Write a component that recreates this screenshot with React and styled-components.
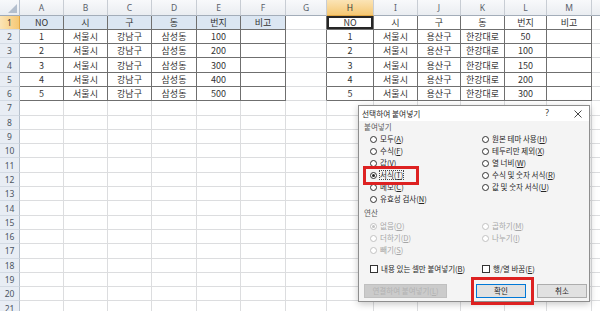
import React from 'react';
import styled, { createGlobalStyle } from 'styled-components';

const GlobalStyle = createGlobalStyle`
  html, body { margin: 0; padding: 0; background: #fff; }
  body { font-family: "Noto Sans CJK KR", "Noto Sans", sans-serif; overflow: hidden; }
`;

const COLS = ['A', 'B', 'C', 'D', 'E', 'F', 'G', 'H', 'I', 'J', 'K', 'L', 'M', 'N'];
const WIDTHS = [44, 44, 44, 45, 44, 45, 41, 47, 44, 43, 44, 42, 45, 40];
const ROW_COUNT = 21;

const HEAD = ['NO', '시', '구', '동', '번지', '비고'];
const LEFT = [1, 2, 3, 4, 5].map((n) => [n, '서울시', '강남구', '삼성동', n * 100, '']);
const RIGHT = [[1, 50], [2, 100], [3, 150], [4, 200], [5, 300]].map(([n, v]) => [n, '서울시', '용산구', '한강대로', v, '']);

const Screen = styled.div`
  position: relative;
  width: 600px;
  height: 311px;
  overflow: hidden;
`;

const Sheet = styled.div`
  display: grid;
  grid-template-columns: 20px ${WIDTHS.map((w) => w + 'px').join(' ')};
  grid-template-rows: 15.5px repeat(${ROW_COUNT}, 14.3px);
`;

const Corner = styled.div`
  position: relative;
  background: linear-gradient(#f7f9fb, #e9edf2);
  border-right: 1px solid #b9c3cf;
  border-bottom: 1px solid #9fabb9;
  svg { position: absolute; right: 2px; bottom: 2px; }
`;

const ColHead = styled.div`
  display: flex;
  align-items: center;
  justify-content: center;
  font-family: "Noto Sans", sans-serif;
  font-size: 8.5px;
  color: ${(p) => (p.$active ? '#3b3b3b' : '#59606a')};
  background: ${(p) => (p.$active ? 'linear-gradient(#fbe4b6, #f5c874)' : 'linear-gradient(#f8f9fb, #eaedf1)')};
  border-right: 1px solid #c8cdd4;
  border-bottom: 1px solid ${(p) => (p.$active ? '#e2a845' : '#a3adb9')};
`;

const RowHead = styled.div`
  display: flex;
  align-items: center;
  justify-content: center;
  font-family: "Noto Sans", sans-serif;
  font-size: 8.5px;
  color: ${(p) => (p.$active ? '#3b3b3b' : '#4d5663')};
  background: ${(p) => (p.$active ? 'linear-gradient(90deg, #fbe4b6, #f5c874)' : '#e8edf4')};
  border-right: 1px solid ${(p) => (p.$active ? '#e2a845' : '#b4bfcc')};
  border-bottom: 1px solid #d3dae3;
`;

const Cell = styled.div`
  display: flex;
  align-items: center;
  justify-content: center;
  overflow: hidden;
  white-space: nowrap;
  font-size: 9px;
  line-height: 1;
  color: #333;
  background: ${(p) => (p.$fill ? '#dbe6f2' : '#fff')};
  border-right: 1px solid ${(p) => (p.$table || p.$edge ? '#6f6f6f' : '#dcdddf')};
  border-bottom: 1px solid ${(p) => (p.$table ? '#6f6f6f' : '#dcdddf')};
  box-shadow: ${(p) => (p.$active ? 'inset 0 0 0 2px #262626' : 'none')};
`;

const Dialog = styled.div`
  position: absolute;
  left: 358px;
  top: 105px;
  width: 232px;
  height: 197px;
  box-sizing: border-box;
  display: flex;
  flex-direction: column;
  background: #f4f4f4;
  border: 1px solid #8e8e8e;
  box-shadow: 0 2px 7px rgba(0, 0, 0, 0.22);
  color: #262626;
  font-size: 7.5px;
  line-height: 1;
`;

const TitleBar = styled.div`
  height: 15px;
  display: flex;
  align-items: center;
  padding-left: 3px;
  background: #fff;
`;

const Title = styled.span`
  flex: 1;
  font-size: 7.7px;
`;

const TitleButton = styled.span`
  width: ${(p) => p.$w}px;
  display: flex;
  align-items: center;
  justify-content: center;
  font-family: "Noto Sans", sans-serif;
  font-size: 8.5px;
  color: #333;
`;

const Body = styled.div`
  flex: 1;
  display: flex;
  flex-direction: column;
  padding: 0 2px 0 5px;
`;

const Label = styled.div`
  height: 10px;
  display: flex;
  align-items: center;
  margin-top: ${(p) => p.$mt}px;
  color: #5a5a5a;
`;

const OptionGrid = styled.div`
  display: grid;
  grid-template-columns: 112px 1fr;
  grid-template-rows: repeat(${(p) => p.$rows}, 12px);
  grid-auto-flow: column;
  margin-top: ${(p) => p.$mt}px;
  padding-left: 6px;
`;

const Option = styled.div`
  position: relative;
  display: flex;
  align-items: center;
  gap: 3px;
  white-space: nowrap;
  color: ${(p) => (p.$disabled ? '#a6a6a6' : '#262626')};
  z-index: ${(p) => (p.$mark ? 1 : 'auto')};
  &::after {
    content: '';
    display: ${(p) => (p.$mark ? 'block' : 'none')};
    position: absolute;
    left: -7px;
    top: -3px;
    width: 56px;
    height: 19px;
    box-sizing: border-box;
    border: 3.5px solid #dd2121;
  }
`;

const Radio = styled.span`
  width: 7px;
  height: 7px;
  flex: none;
  box-sizing: border-box;
  border-radius: 50%;
  border: 1px solid ${(p) => (p.$disabled ? '#c2c2c2' : '#333')};
  background: #fff;
  display: flex;
  align-items: center;
  justify-content: center;
  &::before {
    content: '';
    display: ${(p) => (p.$checked ? 'block' : 'none')};
    width: 3px;
    height: 3px;
    border-radius: 50%;
    background: ${(p) => (p.$disabled ? '#c2c2c2' : '#222')};
  }
`;

const Check = styled.span`
  width: 8px;
  height: 8px;
  flex: none;
  box-sizing: border-box;
  border: 1px solid #333;
  background: #fff;
`;

const Focus = styled.span`
  outline: 1px dotted #444;
  outline-offset: 0;
`;

const ButtonRow = styled.div`
  display: flex;
  height: 14px;
  margin-top: 9px;
`;

const Button = styled.div`
  position: relative;
  width: ${(p) => p.$w}px;
  margin-left: ${(p) => p.$ml || 0}px;
  box-sizing: border-box;
  display: flex;
  align-items: center;
  justify-content: center;
  white-space: nowrap;
  background: ${(p) => (p.$disabled ? '#cbcbcb' : '#e1e1e1')};
  border: 1px solid ${(p) => (p.$primary ? '#0078d7' : p.$disabled ? '#c0c0c0' : '#adadad')};
  color: ${(p) => (p.$disabled ? '#b2b2b2' : '#262626')};
  &::after {
    content: '';
    display: ${(p) => (p.$mark ? 'block' : 'none')};
    position: absolute;
    left: -6px;
    top: -8px;
    width: 63px;
    height: 28px;
    box-sizing: border-box;
    border: 3px solid #dd2121;
  }
`;

const Spacer = styled.div`
  flex: 1;
`;

function Key({ text, k }) {
  const i = text.indexOf('(' + k + ')');
  return (
    <span>
      {text.slice(0, i)}(<u>{k}</u>)
    </span>
  );
}

const PASTE_LEFT = [['모두', 'A'], ['수식', 'F'], ['값', 'V'], ['서식', 'T'], ['메모', 'C'], ['유효성 검사', 'N']];
const PASTE_RIGHT = [['원본 테마 사용', 'H'], ['테두리만 제외', 'X'], ['열 너비', 'W'], ['수식 및 숫자 서식', 'R'], ['값 및 숫자 서식', 'U']];
const OPS = [['없음', 'O'], ['더하기', 'D'], ['빼기', 'S'], ['곱하기', 'M'], ['나누기', 'I']];

function cellFor(r, c) {
  if (r > 6) return {};
  const row = r - 1;
  if (c <= 5) {
    const v = row === 0 ? HEAD[c] : LEFT[row - 1][c];
    return { v, table: true, fill: row === 0 };
  }
  if (c >= 7 && c <= 12) {
    const v = row === 0 ? HEAD[c - 7] : RIGHT[row - 1][c - 7];
    return { v, table: true, active: row === 0 && c === 7 };
  }
  return { edge: c === 6 };
}

function PasteDialog() {
  return (
    <Dialog>
      <TitleBar>
        <Title>선택하여 붙여넣기</Title>
        <TitleButton $w={16}>?</TitleButton>
        <TitleButton $w={12} />
        <TitleButton $w={22}>
          <svg width="8" height="8" viewBox="0 0 8 8">
            <path d="M0.5 0.5 L7.5 7.5 M7.5 0.5 L0.5 7.5" stroke="#333" strokeWidth="0.9" fill="none" />
          </svg>
        </TitleButton>
      </TitleBar>
      <Body>
        <Label $mt={1}>붙여넣기</Label>
        <OptionGrid $rows={6} $mt={1}>
          {PASTE_LEFT.concat(PASTE_RIGHT).map(([t, k]) => {
            const sel = k === 'T';
            return (
              <Option key={k} $mark={sel}>
                <Radio $checked={sel} />
                {sel ? (
                  <Focus><Key text={t + '(' + k + ')'} k={k} /></Focus>
                ) : (
                  <Key text={t + '(' + k + ')'} k={k} />
                )}
              </Option>
            );
          })}
        </OptionGrid>
        <Label $mt={3}>연산</Label>
        <OptionGrid $rows={3} $mt={2}>
          {OPS.map(([t, k]) => (
            <Option key={k} $disabled>
              <Radio $disabled $checked={k === 'O'} />
              <Key text={t + '(' + k + ')'} k={k} />
            </Option>
          ))}
        </OptionGrid>
        <OptionGrid $rows={1} $mt={7}>
          <Option>
            <Check />
            <Key text="내용 있는 셀만 붙여넣기(B)" k="B" />
          </Option>
          <Option>
            <Check />
            <Key text="행/열 바꿈(E)" k="E" />
          </Option>
        </OptionGrid>
        <ButtonRow>
          <Button $w={83} $disabled>
            <Key text="연결하여 붙여넣기(L)" k="L" />
          </Button>
          <Spacer />
          <Button $w={50} $primary $mark>확인</Button>
          <Button $w={50} $ml={11}>취소</Button>
        </ButtonRow>
      </Body>
    </Dialog>
  );
}

export default function App() {
  const rows = [];
  for (let r = 1; r <= ROW_COUNT; r++) rows.push(r);
  return (
    <Screen>
      <GlobalStyle />
      <Sheet>
        <Corner>
          <svg width="9" height="9" viewBox="0 0 9 9">
            <path d="M9 0 L9 9 L0 9 Z" fill="#b3bfce" />
          </svg>
        </Corner>
        {COLS.map((c, i) => (
          <ColHead key={c} $active={i === 7}>{c}</ColHead>
        ))}
        {rows.map((r) => (
          <React.Fragment key={r}>
            <RowHead $active={r === 1}>{r}</RowHead>
            {COLS.map((c, ci) => {
              const cell = cellFor(r, ci);
              return (
                <Cell key={c} $table={cell.table} $fill={cell.fill} $edge={cell.edge} $active={cell.active}>
                  {cell.v}
                </Cell>
              );
            })}
          </React.Fragment>
        ))}
      </Sheet>
      <PasteDialog />
    </Screen>
  );
}
